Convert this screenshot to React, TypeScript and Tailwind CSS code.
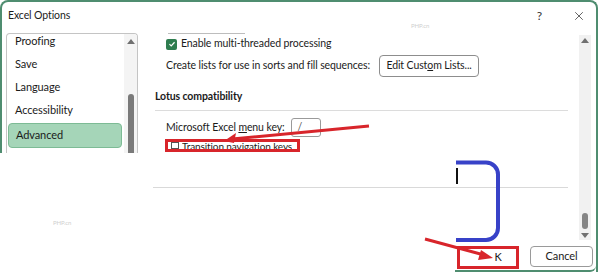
import React from 'react';
import { X } from 'lucide-react';

const NAV_ITEMS = ['Proofing', 'Save', 'Language', 'Accessibility'];

function Check() {
  return (
    <span className="flex h-[11px] w-[11px] shrink-0 items-center justify-center rounded-[2px] bg-[#2e7d4f]">
      <svg viewBox="0 0 10 10" className="h-[8px] w-[8px]">
        <path d="M1.8 5.2 L4 7.3 L8.2 2.8" fill="none" stroke="#fff" strokeWidth="1.5" />
      </svg>
    </span>
  );
}

export default function App() {
  return (
    <div className="relative h-[273px] w-[600px] overflow-hidden bg-white font-['Lato','Liberation_Sans',sans-serif] text-[10.5px] tracking-[-0.1px] text-[#1b1b1b]">
      <div className="flex w-[598px] flex-col">
        {/* title bar */}
        <div className="flex h-[30px] items-center rounded-t-[8px] border-x-2 border-t-2 border-[#4f8d70] pl-[6px] pr-[10px]">
          <span>Excel Options</span>
          <span className="ml-auto mr-[30px] text-[12px] text-[#333]">?</span>
          <X size={14} strokeWidth={1.2} className="text-[#222]" />
        </div>

        <div className="flex">
          {/* left nav */}
          <div className="h-[123px] w-[153px] shrink-0 border-l-2 border-[#4f8d70] pl-[4px] pt-[3px]">
            <div className="flex h-[120px] w-[132px] overflow-hidden rounded-t-[4px] border border-b-0 border-[#c4c4c4]">
              <div className="-mt-[4px] flex w-[116px] flex-col text-[11px]">
                {NAV_ITEMS.map((item) => (
                  <div key={item} className="flex h-[23px] items-center pl-[8px]">
                    {item}
                  </div>
                ))}
                <div className="ml-[1px] mt-[1px] flex h-[25px] w-[114px] items-center rounded-[4px] border border-[#7dbb95] bg-[#a5d5b8] pl-[7px]">
                  Advanced
                </div>
              </div>
              <div className="ml-[1px] flex w-[13px] flex-col items-center bg-[#f4f4f4] pt-[5px]">
                <svg viewBox="0 0 8 5" className="h-[5px] w-[8px]">
                  <path d="M0 5 L4 0 L8 5 Z" fill="#707070" />
                </svg>
                <div className="mt-[50px] h-[60px] w-[6px] rounded-t-[3px] bg-[#7a7a7a]" />
              </div>
            </div>
          </div>

          {/* right content */}
          <div className="flex flex-1 flex-col border-r-2 border-[#4f8d70]">
            <div className="flex h-[215px]">
              <div className="flex flex-1 flex-col">
                <div className="ml-[15px] mt-[3px] h-px w-[77px] bg-[#bdbdbd]" />
                <div className="mt-[3px] flex h-[14px] items-center gap-[4px] pl-[13px]">
                  <Check />
                  <span>Enable multi-threaded processing</span>
                </div>
                <div className="mt-[4px] flex h-[22px] items-center gap-[9px] pl-[13px]">
                  <span>Create lists for use in sorts and fill sequences:</span>
                  <span className="flex h-[22px] w-[100px] items-center justify-center rounded-[4px] border border-[#8d8d8d]">
                    Edit Cust<span className="underline">o</span>m Lists...
                  </span>
                </div>
                <div className="mt-[13px] flex h-[14px] items-center pl-[2px] font-bold">Lotus compatibility</div>
                <div className="ml-[2px] mt-[6px] h-px w-[413px] bg-[#dcdcdc]" />
                <div className="mt-[7px] flex h-[19px] items-center gap-[6px] pl-[13px]">
                  <span>
                    Microsoft Excel <span className="underline">m</span>enu key:
                  </span>
                  <span className="flex h-[19px] w-[30px] items-center rounded-[3px] border border-[#9a9a9a] pl-[6px] text-[#555]">
                    /
                  </span>
                </div>
                <div className="ml-[12px] mt-[2px] flex h-[13px] w-[135px] items-center gap-[3px] overflow-hidden border-[3px] border-[#d8252b] bg-white pl-[3px] text-[10px] leading-none">
                  <span className="h-[7px] w-[8px] shrink-0 border border-[#555] bg-white" />
                  <span className="truncate underline decoration-[#d8252b]">Transition navigation keys</span>
                </div>
                <div className="mt-[35px] h-px w-[415px] bg-[#d9d9d9]" />
              </div>
              {/* right scrollbar */}
              <div className="mr-[5px] mt-[5px] flex h-[205px] w-[12px] flex-col items-center bg-[#f1f1f1] pt-[3px]">
                <svg viewBox="0 0 8 5" className="h-[5px] w-[8px]">
                  <path d="M0 5 L4 0 L8 5 Z" fill="#707070" />
                </svg>
                <div className="mt-[170px] h-[16px] w-[6px] rounded-[3px] bg-[#858585]" />
                <svg viewBox="0 0 8 5" className="mt-[4px] h-[5px] w-[8px]">
                  <path d="M0 0 L8 0 L4 5 Z" fill="#707070" />
                </svg>
              </div>
            </div>
            {/* footer */}
            <div className="flex justify-end">
              <div className="flex h-[27px] w-[141px] items-start gap-[11px] rounded-br-[6px] border-b-2 border-[#4f8d70] pl-[2px] pt-[1px] text-[11px]">
                <span className="flex h-[23px] w-[62px] items-center justify-center border-[3px] border-[#d8252b] bg-white pl-[20px]">
                  K
                </span>
                <span className="flex h-[21px] w-[63px] items-center justify-center rounded-[4px] border border-[#9a9a9a]">
                  Cancel
                </span>
              </div>
            </div>
          </div>
        </div>
      </div>

      {/* watermarks */}
      <span className="absolute left-[411px] top-[21px] text-[6px] text-[#cfcfcf]">PHP.cn</span>
      <span className="absolute left-[53px] top-[218px] text-[6px] text-[#cfcfcf]">PHP.cn</span>

      {/* annotations */}
      <div className="absolute left-[456px] top-[168px] h-[16px] w-[2px] bg-[#111]" />
      <svg className="pointer-events-none absolute left-0 top-0" width="600" height="273">
        <path d="M456 162.5 H486 a12 12 0 0 1 12 12 V228 a12 12 0 0 1 -12 12 H456" fill="none" stroke="#3842c8" strokeWidth="4" />
        <line x1="369" y1="126" x2="232" y2="139" stroke="#d8252b" strokeWidth="3" />
        <path d="M224 141 L236 133 L234 143 Z" fill="#d8252b" />
        <line x1="425" y1="239" x2="484" y2="255" stroke="#d8252b" strokeWidth="3" />
        <path d="M493 258 L481 250 L478 260 Z" fill="#d8252b" />
      </svg>
    </div>
  );
}
